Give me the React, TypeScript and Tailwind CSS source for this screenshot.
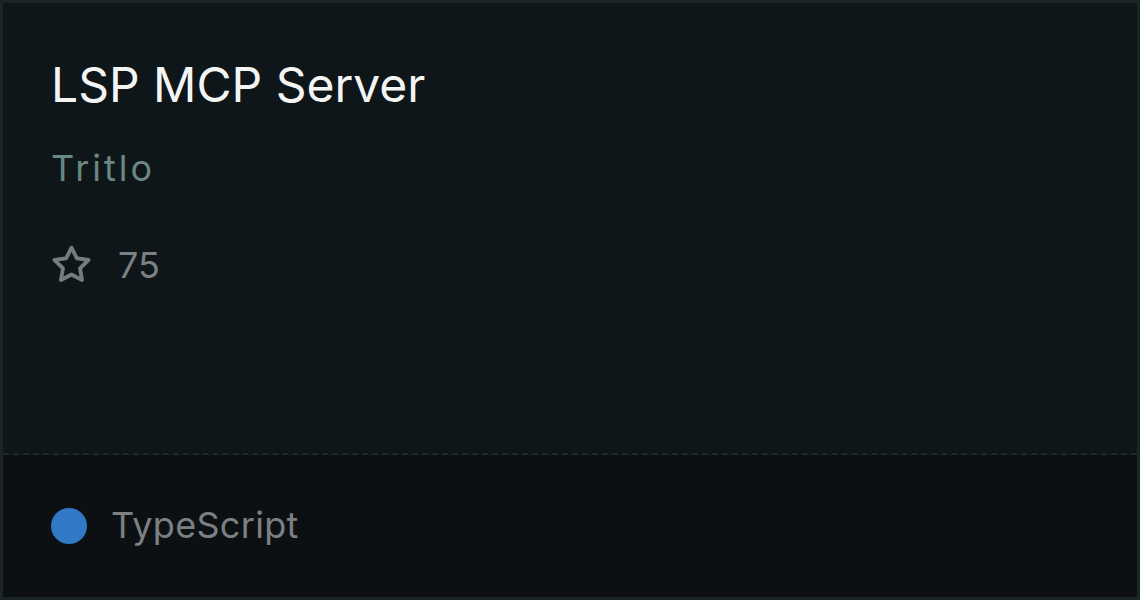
import React from 'react';

const repo = {
  name: 'LSP MCP Server',
  owner: 'Tritlo',
  stars: 75,
  language: 'TypeScript',
  languageColor: '#3178c6',
};

// octicon star-16
const StarIcon = ({ size = 40 }: { size?: number }) => (
  <svg width={size} height={size} viewBox="0 0 16 16" fill="currentColor" className="text-[#767b7e] shrink-0">
    <path d="M8 .25a.75.75 0 0 1 .673.418l1.882 3.815 4.21.612a.75.75 0 0 1 .416 1.279l-3.046 2.97.719 4.192a.751.751 0 0 1-1.088.791L8 12.347l-3.766 1.98a.75.75 0 0 1-1.088-.79l.72-4.194L.818 6.374a.75.75 0 0 1 .416-1.28l4.21-.611L7.327.668A.75.75 0 0 1 8 .25Zm0 2.445L6.615 5.5a.75.75 0 0 1-.564.41l-3.097.45 2.24 2.184a.75.75 0 0 1 .216.664l-.528 3.084 2.769-1.456a.75.75 0 0 1 .698 0l2.77 1.456-.53-3.084a.75.75 0 0 1 .216-.664l2.24-2.183-3.096-.45a.75.75 0 0 1-.564-.41L8 2.694Z" />
  </svg>
);

const App = () => {
  return (
    <div
      className="w-[1140px] h-[600px] flex flex-col border-[3px] border-[#1b2427] bg-[#0f1619] overflow-hidden"
      style={{ fontFamily: 'Inter, "Noto Sans", sans-serif' }}
    >
      {/* Header */}
      <div className="flex-1 flex flex-col px-[48px] pt-[53px] border-b-2 border-dashed border-[#1f292c]">
        <h1 className="text-[48px] leading-[1.2] text-[#f3f5f5] font-normal">{repo.name}</h1>
        <div className="mt-[33px] text-[36px] leading-[1.2] tracking-[3px] text-[#6a8783]">{repo.owner}</div>
        <div className="mt-[54px] flex items-center gap-[26px] text-[36px] leading-[1.2] text-[#7b8083]">
          <StarIcon size={41} />
          <span>{repo.stars}</span>
        </div>
      </div>

      {/* Footer */}
      <div className="h-[142px] shrink-0 flex items-center gap-[24px] px-[48px] bg-[#0c1013]">
        <span className="w-[36px] h-[36px] rounded-full" style={{ backgroundColor: repo.languageColor }} />
        <span className="text-[36px] leading-[1.2] tracking-[0.3px] text-[#7b8083]">{repo.language}</span>
      </div>
    </div>
  );
};

export default App;
